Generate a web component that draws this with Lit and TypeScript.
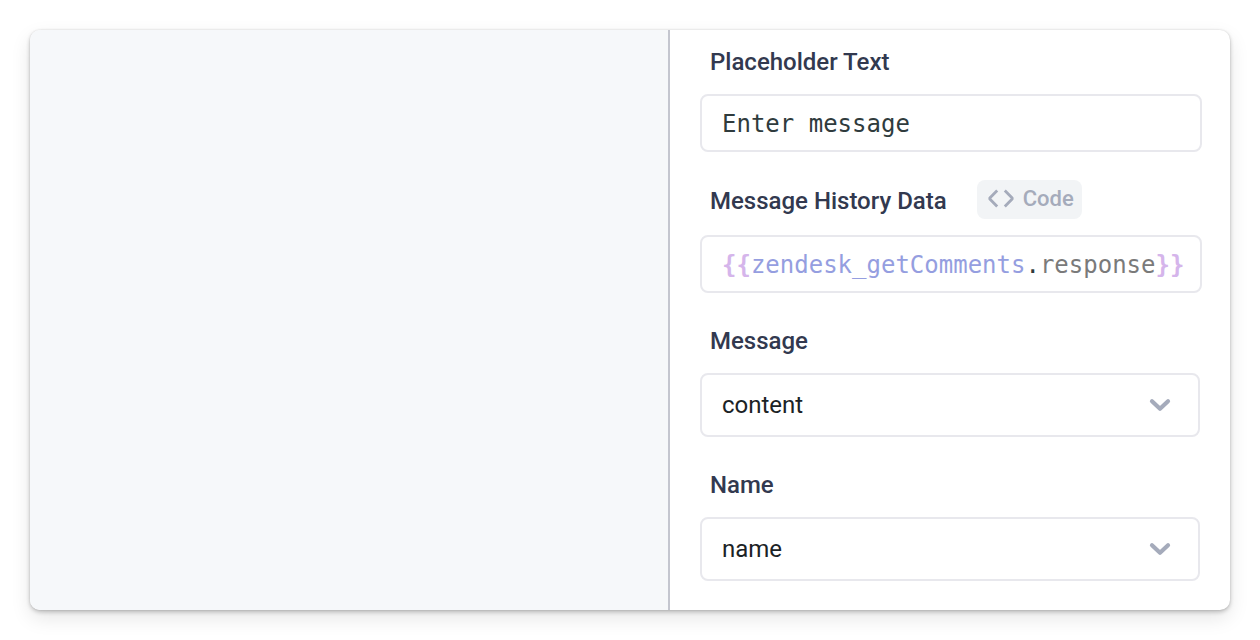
import { LitElement, html, css } from "lit";
import { customElement, property, state } from "lit/decorators.js";

const controlStyles = css`
  * {
    box-sizing: border-box;
  }
  .field {
    display: flex;
    flex-direction: column;
    gap: 14px;
  }
  .label {
    padding-left: 10px;
    color: #32394f;
    font-size: 24px;
    font-weight: 500;
    line-height: 36px;
  }
  .control {
    width: 100%;
    margin: 0;
    border: 2px solid #e8e8ed;
    border-radius: 8px;
    padding: 0 20px;
    background: #fff;
    outline: none;
  }
  .control:focus-visible {
    border-color: #959ee0;
  }
  .mono {
    height: 58px;
    padding-top: 2px;
    color: #2f3b3d;
    font-family: "DejaVu Sans Mono", monospace;
    font-size: 24px;
    line-height: 52px;
  }
`;

@customElement("select-field")
export class SelectField extends LitElement {
  @property() label = "";
  @property() value = "";
  @property({ type: Array }) options: string[] = [];

  static styles = [
    controlStyles,
    css`
      :host {
        display: block;
        padding: 2px 2px 0 0;
      }
      .wrap {
        display: grid;
        align-items: center;
      }
      .select {
        grid-area: 1 / 1;
        height: 64px;
        appearance: none;
        color: #1b2225;
        font: 400 24px/32px Roboto, sans-serif;
      }
      .chevron {
        grid-area: 1 / 1;
        justify-self: end;
        margin-right: 28px;
        pointer-events: none;
      }
    `,
  ];

  render() {
    return html`
      <div class="field">
        <label class="label" for="select">${this.label}</label>
        <div class="wrap">
          <select
            class="control select"
            id="select"
            @change=${(e: Event) => (this.value = (e.target as HTMLSelectElement).value)}
          >
            ${this.options.map((o) => html`<option ?selected=${o === this.value}>${o}</option>`)}
          </select>
          <svg class="chevron" width="24" height="16" viewBox="0 0 24 16" aria-hidden="true">
            <path d="M4 4.2 12 11.7 20 4.2" fill="none" stroke="#a5abbb" stroke-width="4.2" stroke-linecap="round" stroke-linejoin="round" />
          </svg>
        </div>
      </div>
    `;
  }
}

@customElement("app-root")
export class AppRoot extends LitElement {
  @state() private code = "{{zendesk_getComments.response}}";

  static styles = [
    controlStyles,
    css`
      :host {
        display: block;
        min-height: 100vh;
        box-sizing: border-box;
        padding: 30px;
        background: #fff;
        font-family: Roboto, sans-serif;
      }
      .card {
        display: grid;
        grid-template-columns: 8fr 7fr;
        border-radius: 10px;
        overflow: hidden;
        background: #fff;
        box-shadow: 0 0 2px rgba(0, 0, 0, 0.12), 0 2px 4px rgba(0, 0, 0, 0.22), 0 8px 20px rgba(0, 0, 0, 0.1);
      }
      .canvas {
        border-right: 2px solid #c4c6cf;
        background: #f6f8fa;
      }
      .panel {
        display: flex;
        flex-direction: column;
        gap: 28px;
        min-width: 0;
        padding: 14px 28px 29px 30px;
      }
      .heading {
        display: flex;
        align-items: center;
        gap: 30px;
      }
      .code-toggle {
        display: flex;
        align-items: center;
        gap: 8px;
        height: 39px;
        margin: 0 0 2px;
        border: 0;
        border-radius: 8px;
        padding: 0 8px 2px 10px;
        background: #f2f4f6;
        color: #a5abbb;
        font: 500 22px/36px Roboto, sans-serif;
      }
      .editor {
        display: grid;
      }
      .editor > * {
        grid-area: 1 / 1;
      }
      .highlight {
        overflow: hidden;
        white-space: pre;
      }
      .overlay {
        background: transparent;
        border-color: transparent;
        color: transparent;
        caret-color: #2f3b3d;
      }
      .brace {
        color: #d5b5eb;
        font-weight: 700;
      }
      .name {
        color: #959ee0;
      }
      .prop {
        color: #7a7a7a;
      }
    `,
  ];

  private highlight() {
    return this.code
      .split(/(\{\{|\}\}|\.\w+)/)
      .filter(Boolean)
      .map((part) => {
        if (part === "{{" || part === "}}") return html`<span class="brace">${part}</span>`;
        if (part.startsWith(".")) return html`.<span class="prop">${part.slice(1)}</span>`;
        return html`<span class="name">${part}</span>`;
      });
  }

  render() {
    return html`
      <main class="card">
        <section class="canvas" aria-label="Canvas"></section>
        <form class="panel">
          <div class="field">
            <label class="label" for="placeholder">Placeholder Text</label>
            <input class="control mono" id="placeholder" type="text" value="Enter message" />
          </div>
          <div class="field">
            <div class="heading">
              <label class="label" for="history">Message History Data</label>
              <button class="code-toggle" type="button">
                <svg width="28" height="20" viewBox="0 0 28 20" fill="none" stroke="currentColor" stroke-width="2.8" stroke-linejoin="round" aria-hidden="true">
                  <path d="M10.2 1.4 2.8 9v1l7.4 7.6M17.8 1.4 25.2 9v1l-7.4 7.6" />
                </svg>
                Code
              </button>
            </div>
            <div class="editor">
              <div class="control mono highlight" aria-hidden="true">${this.highlight()}</div>
              <input
                class="control mono overlay"
                id="history"
                type="text"
                spellcheck="false"
                .value=${this.code}
                @input=${(e: Event) => (this.code = (e.target as HTMLInputElement).value)}
              />
            </div>
          </div>
          <select-field label="Message" value="content" .options=${["content", "name"]}></select-field>
          <select-field label="Name" value="name" .options=${["content", "name"]}></select-field>
        </form>
      </main>
    `;
  }
}
